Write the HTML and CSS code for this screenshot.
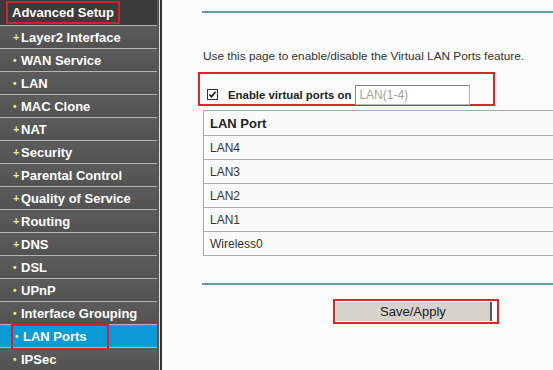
FILE: index.html
```html
<!DOCTYPE html>
<html>
<head>
<meta charset="utf-8">
<link rel="stylesheet" href="styles.css">
</head>
<body>
<div class="page">
  <nav class="sidebar">
    <div class="menu-head"><span class="hl-head">Advanced Setup</span></div>
    <div class="item"><span class="mk plus">+</span>Layer2 Interface</div>
    <div class="item"><span class="mk">•</span>WAN Service</div>
    <div class="item"><span class="mk">•</span>LAN</div>
    <div class="item"><span class="mk">•</span>MAC Clone</div>
    <div class="item"><span class="mk plus">+</span>NAT</div>
    <div class="item"><span class="mk plus">+</span>Security</div>
    <div class="item"><span class="mk plus">+</span>Parental Control</div>
    <div class="item"><span class="mk plus">+</span>Quality of Service</div>
    <div class="item"><span class="mk plus">+</span>Routing</div>
    <div class="item"><span class="mk plus">+</span>DNS</div>
    <div class="item"><span class="mk">•</span>DSL</div>
    <div class="item"><span class="mk">•</span>UPnP</div>
    <div class="item"><span class="mk">•</span>Interface Grouping</div>
    <div class="item active"><span class="hl-item"><span class="mk">•</span>LAN Ports</span></div>
    <div class="item"><span class="mk">•</span>IPSec</div>
  </nav>
  <div class="divider"></div>
  <main class="content">
    <hr class="rule top">
    <p class="intro">Use this page to enable/disable the Virtual LAN Ports feature.</p>
    <div class="enable-box">
      <span class="cb"><svg width="11" height="11" viewBox="0 0 11 11"><rect x="0.5" y="0.5" width="10" height="10" fill="#fff" stroke="#333"/><path d="M2.5 5.5 L4.5 7.8 L8.5 2.8" fill="none" stroke="#111" stroke-width="1.6"/></svg></span>
      <span class="enable-label">Enable virtual ports on</span>
      <span class="field">LAN(1-4)</span>
    </div>
    <div class="ports">
      <div class="cell head">LAN Port</div>
      <div class="cell">LAN4</div>
      <div class="cell">LAN3</div>
      <div class="cell">LAN2</div>
      <div class="cell">LAN1</div>
      <div class="cell">Wireless0</div>
    </div>
    <hr class="rule bottom">
    <div class="actions">
      <span class="btn-wrap"><button class="btn">Save/Apply</button></span>
    </div>
  </main>
</div>
</body>
</html>
```
FILE: styles.css
```css
html, body {
  margin: 0;
  padding: 0;
  background: #fcfcfc;
  overflow: hidden;
}
.page {
  display: flex;
  width: 553px;
  height: 370px;
  font-family: "Liberation Sans", Arial, sans-serif;
}
.sidebar {
  width: 157px;
  flex: none;
  background: #575757;
  display: flex;
  flex-direction: column;
}
.menu-head {
  height: 25px;
  background: #3b3b3b;
  color: #fff;
  font-weight: bold;
  font-size: 13px;
  display: flex;
  align-items: center;
  padding-left: 6px;
  box-sizing: border-box;
}
.hl-head {
  border: 2px solid #d0232a;
  padding: 2px 4px;
  line-height: 15px;
  width: 102px;
}
.item {
  height: 23px;
  box-sizing: border-box;
  border-top: 1px solid #b4b4b4;
  color: #fff;
  font-weight: bold;
  font-size: 13px;
  display: flex;
  align-items: center;
  padding-left: 13px;
  background: linear-gradient(#5c5c5c, #525252);
}
.mk {
  color: #e6e8a8;
  font-size: 10px;
  width: 8px;
  display: inline-block;
}
.mk.plus {
  font-size: 11px;
}
.item.active {
  background: #0c9bd9;
  padding-left: 11px;
}
.hl-item {
  position: relative;
  z-index: 1;
  border: 2px solid #d0232a;
  height: 26px;
  width: 98px;
  box-sizing: border-box;
  display: flex;
  align-items: center;
  padding-left: 2px;
  margin-top: 1px;
}
.divider {
  width: 5px;
  flex: none;
  background: linear-gradient(to right, #555 0, #555 2px, #dcdcdc 2px, #dcdcdc 3px, #333 3px, #333 5px);
}
.content {
  flex: 1;
  padding-left: 40px;
  min-width: 0;
  color: #333;
  font-size: 12px;
}
.rule {
  border: 0;
  height: 2px;
  margin: 0;
  background: #5a9fa3;
}
.rule.top {
  margin-top: 11px;
}
.intro {
  margin: 36px 0 0 1px;
  line-height: 14px;
  font-size: 11.8px;
  color: #333;
}
.enable-box {
  margin: 9px 0 0 -4px;
  width: 286px;
  border: 2px solid #e0242c;
  display: flex;
  align-items: center;
  padding-left: 7px;
  padding-top: 11px;
  height: 19px;
}
.cb {
  display: inline-flex;
  margin-right: 10px;
}
.enable-label {
  font-weight: bold;
  font-size: 11.4px;
  color: #222;
  margin-right: 4px;
}
.field {
  width: 110px;
  height: 18px;
  border: 1px solid #b8b8b8;
  border-top-color: #888;
  border-left-color: #888;
  color: #a0a0a0;
  padding-left: 3px;
  line-height: 18px;
  font-size: 12px;
  background: #fff;
}
.ports {
  margin: 4px 0 0 1px;
  border-left: 1px solid #aaa;
}
.cell {
  height: 23px;
  border-top: 1px solid #aaa;
  display: flex;
  align-items: center;
  padding-left: 6px;
  background: #fbfbfb;
  color: #333;
  font-size: 12px;
}
.cell.head {
  height: 24px;
  font-weight: bold;
  font-size: 13px;
  color: #222;
}
.cell:last-child {
  border-bottom: 1px solid #aaa;
}
.rule.bottom {
  margin-top: 27px;
}
.actions {
  padding-left: 131px;
  margin-top: 14px;
}
.btn-wrap {
  display: inline-flex;
  border: 2px solid #d8262e;
  padding: 1px 5px 1px 1px;
  background: #fff;
}
.btn {
  width: 156px;
  height: 19px;
  border: 0;
  border-right: 2px solid #555;
  background: #d6d3cc;
  font-family: "Liberation Sans", Arial, sans-serif;
  font-size: 13px;
  color: #222;
  padding: 0;
  line-height: 19px;
}
```
